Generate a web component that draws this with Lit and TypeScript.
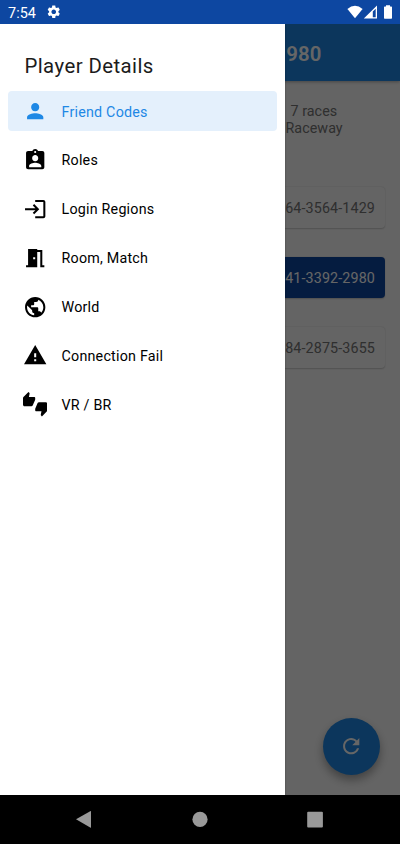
import { LitElement, html, svg, css } from "lit";
import { customElement, property, state } from "lit/decorators.js";
import { classMap } from "lit/directives/class-map.js";

const ICONS: Record<string, string> = {
  person:
    "M12 12c2.21 0 4-1.79 4-4s-1.79-4-4-4-4 1.79-4 4 1.79 4 4 4zm0 2c-2.67 0-8 1.34-8 4v2h16v-2c0-2.66-5.33-4-8-4z",
  badge:
    "M19 3h-4.18C14.4 1.84 13.3 1 12 1c-1.3 0-2.4.84-2.82 2H5c-1.1 0-2 .9-2 2v14c0 1.1.9 2 2 2h14c1.1 0 2-.9 2-2V5c0-1.1-.9-2-2-2zm-7 0c.55 0 1 .45 1 1s-.45 1-1 1-1-.45-1-1 .45-1 1-1zm0 4c1.66 0 3 1.34 3 3s-1.34 3-3 3-3-1.34-3-3 1.34-3 3-3zm6 12H6v-1.4c0-2 4-3.1 6-3.1s6 1.1 6 3.1V19z",
  login:
    "M11 7 9.6 8.4l2.6 2.6H2v2h10.2l-2.6 2.6L11 17l5-5-5-5zm9 12h-8v2h8c1.1 0 2-.9 2-2V5c0-1.1-.9-2-2-2h-8v2h8v14z",
  room: "M14 6v15H3v-2h2V3h9v1h5v15h2v2h-4V6h-3zm-4 5v2h2v-2h-2z",
  world:
    "M12 2C6.48 2 2 6.48 2 12s4.48 10 10 10 10-4.48 10-10S17.52 2 12 2zm-1 17.93c-3.95-.49-7-3.85-7-7.93 0-.62.08-1.21.21-1.79L9 15v1c0 1.1.9 2 2 2v1.93zm6.9-2.54c-.26-.81-1-1.39-1.9-1.39h-1v-3c0-.55-.45-1-1-1H8v-2h2c.55 0 1-.45 1-1V7h2c1.1 0 2-.9 2-2v-.41c2.93 1.19 5 4.06 5 7.41 0 2.08-.8 3.97-2.1 5.39z",
  warning: "M1 21h22L12 2 1 21zm12-3h-2v-2h2v2zm0-4h-2v-4h2v4z",
  thumbs:
    "M12 6c0-.55-.45-1-1-1H5.82l.66-3.18.02-.23c0-.31-.13-.59-.33-.8L5.38 0 .44 4.94C.17 5.21 0 5.59 0 6v6.5c0 .83.67 1.5 1.5 1.5h6.75c.62 0 1.15-.38 1.38-.91l2.26-5.29c.07-.17.11-.36.11-.55V6zm10.5 4h-6.75c-.62 0-1.15.38-1.38.91l-2.26 5.29c-.07.17-.11.36-.11.55V18c0 .55.45 1 1 1h5.18l-.66 3.18-.02.24c0 .31.13.59.33.8l.79.78 4.94-4.94c.27-.27.44-.65.44-1.06v-6.5c0-.83-.67-1.5-1.5-1.5z",
  refresh:
    "M17.65 6.35C16.2 4.9 14.21 4 12 4c-4.42 0-7.99 3.58-7.99 8s3.57 8 7.99 8c3.73 0 6.84-2.55 7.73-6h-2.08c-.82 2.33-3.04 4-5.65 4-3.31 0-6-2.69-6-6s2.69-6 6-6c1.66 0 3.14.69 4.22 1.78L13 11h7V4l-2.35 2.35z",
  settings:
    "M19.14 12.94c.04-.3.06-.61.06-.94 0-.32-.02-.64-.07-.94l2.03-1.58c.18-.14.23-.41.12-.61l-1.92-3.32c-.12-.22-.37-.29-.59-.22l-2.39.96c-.5-.38-1.03-.7-1.62-.94l-.36-2.54c-.04-.24-.24-.41-.48-.41h-3.84c-.24 0-.43.17-.47.41l-.36 2.54c-.59.24-1.13.57-1.62.94l-2.39-.96c-.22-.08-.47 0-.59.22L2.74 8.87c-.12.21-.08.47.12.61l2.03 1.58c-.05.3-.09.63-.09.94s.02.64.07.94l-2.03 1.58c-.18.14-.23.41-.12.61l1.92 3.32c.12.22.37.29.59.22l2.39-.96c.5.38 1.03.7 1.62.94l.36 2.54c.05.24.24.41.48.41h3.84c.24 0 .44-.17.47-.41l.36-2.54c.59-.24 1.13-.56 1.62-.94l2.39.96c.22.08.47 0 .59-.22l1.92-3.32c.12-.22.07-.47-.12-.61l-2.01-1.58zM12 15.6c-1.98 0-3.6-1.62-3.6-3.6s1.62-3.6 3.6-3.6 3.6 1.62 3.6 3.6-1.62 3.6-3.6 3.6z",
};

@customElement("md-icon")
class MdIcon extends LitElement {
  @property() name = "person";
  static styles = css`
    :host { display: block; width: 24.4px; height: 24.4px; flex: none; }
    svg { display: block; width: 100%; height: 100%; fill: currentColor; }
  `;
  render() {
    return html`<svg viewBox="0 0 24 24">${svg`<path fill-rule="evenodd" d=${ICONS[this.name]}></path>`}</svg>`;
  }
}

@customElement("status-bar")
class StatusBar extends LitElement {
  static styles = css`
    :host {
      display: flex; align-items: center; height: 24.4px; box-sizing: border-box;
      padding: 0 7px 0 8px; background: #0d47a1; color: #fff;
      font-size: 14.4px; flex: none;
    }
    .time { line-height: 24px; padding-top: 2.6px; letter-spacing: 0.05px; }
    .gear { width: 15.5px; height: 15.5px; margin: 0 0 0 10.5px; }
    .signals { display: block; margin-left: auto; width: 48px; height: 24px; }
  `;
  render() {
    return html`
      <span class="time">7:54</span>
      <md-icon class="gear" name="settings"></md-icon>
      <svg class="signals" viewBox="345 0 48 24" fill="#fff">
        <path d="M347.4 9.1Q355 2.6 362.6 9.1L355 18.2z"></path>
        <path fill-rule="evenodd" d="M363.8 18.6L377 5.6V18.6zM372.8 11.6V17.3H375.7V8.8z"></path>
        <path d="M386 5.3h4v1.3h1.3q.7 0 .7.7v10.8q0 .7-.7.7h-6.6q-.7 0-.7-.7V7.3q0-.7.7-.7H386z"></path>
      </svg>
    `;
  }
}

@customElement("player-screen")
class PlayerScreen extends LitElement {
  static styles = css`
    :host { display: flex; flex-direction: column; height: 100%; background: #fafafa; color: #757575; position: relative; }
    .bar {
      height: 56.9px; flex: none; box-sizing: border-box; padding: 2px 78.5px 0 0; display: flex;
      align-items: center; justify-content: flex-end; background: #1e88e5;
      color: #fff; font-size: 20.4px; font-weight: 600; letter-spacing: 0.1px;
      box-shadow: 0 1px 3px rgba(0, 0, 0, 0.3);
    }
    .summary { margin: 21.6px 0 0 285.5px; font-size: 14.3px; line-height: 17px; letter-spacing: 0.05px; height: 84.4px; }
    .races { padding-left: 5px; }
    .codes { display: flex; flex-direction: column; gap: 29.5px; padding: 0 15px; }
    .code {
      height: 40.5px; box-sizing: border-box; padding: 1px 10px 0; border-radius: 4px;
      display: flex; align-items: center; justify-content: flex-end;
      font-size: 14.3px; letter-spacing: 0.13px; background: #fafafa;
      box-shadow: 0 0.5px 1.5px rgba(0, 0, 0, 0.2);
    }
    .active { background: #0d47a1; color: #fff; }
    .fab {
      position: absolute; right: 20.4px; bottom: 20.4px; width: 57px; height: 57px;
      border-radius: 50%; display: flex; align-items: center; justify-content: center;
      background: #1e88e5; color: #fff; box-shadow: 0 5px 10px rgba(0, 0, 0, 0.35);
    }
  `;
  private codes = ["64-3564-1429", "41-3392-2980", "84-2875-3655"];
  render() {
    return html`
      <div class="bar">980</div>
      <div class="summary"><div class="races">7 races</div><div>Raceway</div></div>
      <div class="codes">
        ${this.codes.map((c, i) => html`<div class=${classMap({ code: true, active: i === 1 })}>${c}</div>`)}
      </div>
      <div class="fab"><md-icon name="refresh"></md-icon></div>
    `;
  }
}

@customElement("nav-drawer")
class NavDrawer extends LitElement {
  @state() private selected = 0;
  private items = [
    { icon: "person", label: "Friend Codes" },
    { icon: "badge", label: "Roles" },
    { icon: "login", label: "Login Regions" },
    { icon: "room", label: "Room, Match" },
    { icon: "world", label: "World" },
    { icon: "warning", label: "Connection Fail" },
    { icon: "thumbs", label: "VR / BR" },
  ];
  static styles = css`
    :host {
      display: block; box-sizing: border-box; width: 285.2px; height: 100%; padding: 0 8.15px;
      background: #fff; box-shadow: 0 0 2px rgba(0, 0, 0, 0.3);
    }
    .title {
      height: 66.4px; box-sizing: border-box; padding: 28.5px 0 0 16.3px; line-height: 26px;
      font-size: 20.4px; font-weight: 400; letter-spacing: 0.42px; color: #1c1c1c;
    }
    .list { display: flex; flex-direction: column; gap: 8.2px; }
    .item {
      height: 40.7px; box-sizing: border-box; padding: 0.2px 0 0 14.4px;
      display: flex; align-items: center; gap: 14.6px;
      border-radius: 4px; color: #000; font-size: 14.3px; font-weight: 400; letter-spacing: 0.21px;
    }
    .item span { padding-top: 0.6px; }
    .selected { background: #e4f0fc; color: #1e88e5; }
  `;
  render() {
    return html`
      <div class="title">Player Details</div>
      <div class="list">
        ${this.items.map(
          (it, i) => html`
            <div class=${classMap({ item: true, selected: i === this.selected })} @click=${() => (this.selected = i)}>
              <md-icon name=${it.icon}></md-icon><span>${it.label}</span>
            </div>
          `
        )}
      </div>
    `;
  }
}

@customElement("app-root")
class AppRoot extends LitElement {
  static styles = css`
    :host {
      display: flex; flex-direction: column; width: 400px; height: 844px; overflow: hidden;
      font-family: Roboto, "Liberation Sans", sans-serif;
    }
    .stage { flex: 1; position: relative; overflow: hidden; }
    .scrim { position: absolute; inset: 0; background: rgba(0, 0, 0, 0.6); }
    .drawer { position: absolute; left: 0; top: 0; }
    .nav { flex: none; height: 48.8px; background: #000; }
    .nav svg { display: block; width: 400px; height: 48.8px; }
  `;
  render() {
    return html`
      <status-bar></status-bar>
      <div class="stage">
        <player-screen></player-screen>
        <div class="scrim"></div>
        <nav-drawer class="drawer"></nav-drawer>
      </div>
      <div class="nav">
        <svg viewBox="0 795.2 400 48.8" fill="#999">
          <path d="M76 819.5L90.2 811.4Q91 811 91 811.8V827.4Q91 828.2 90.2 827.8z"></path>
          <circle cx="200" cy="819.6" r="7.6"></circle>
          <rect x="307.2" y="812" width="15.7" height="15.7" rx="1"></rect>
        </svg>
      </div>
    `;
  }
}
